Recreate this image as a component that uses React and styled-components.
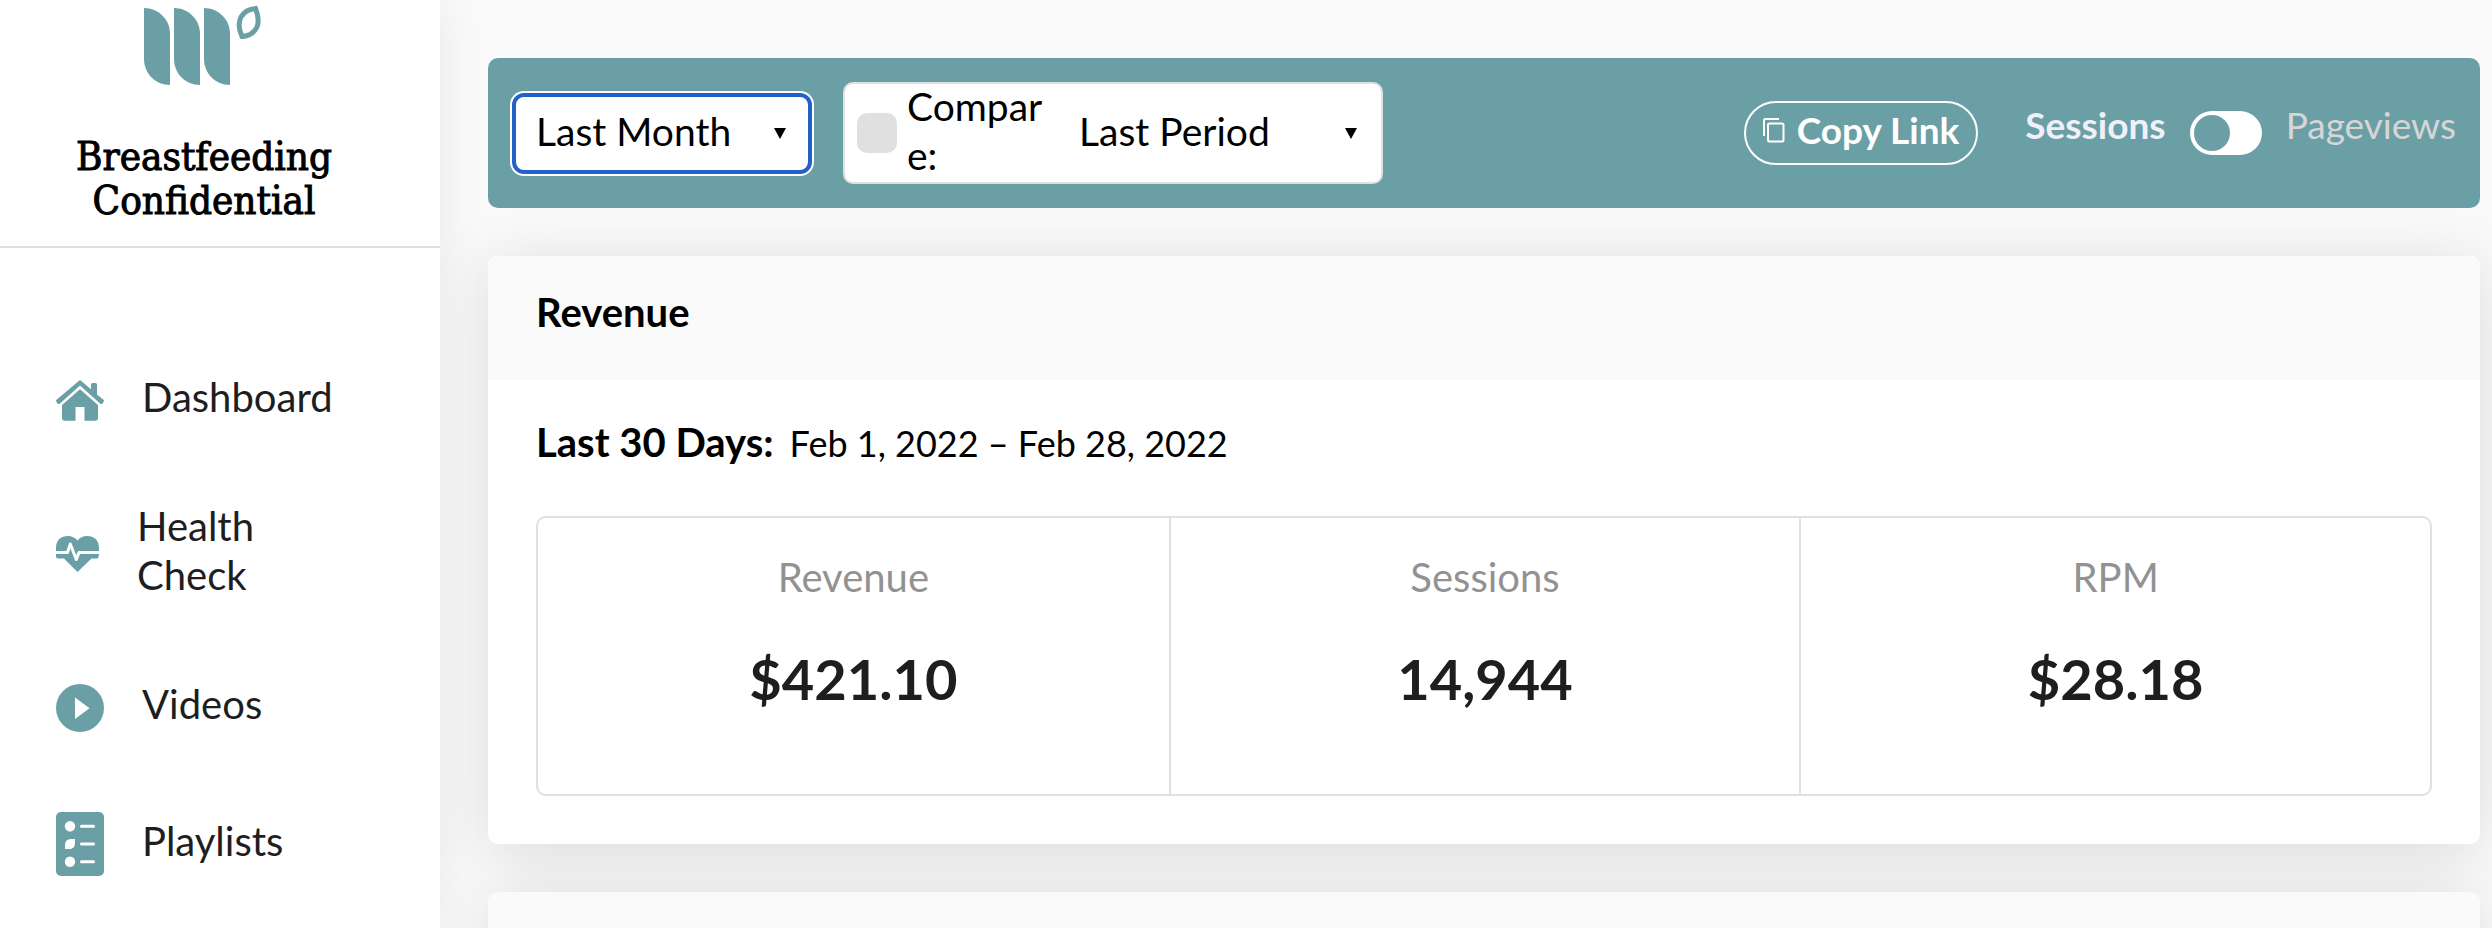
import React, { useState } from 'react'
import styled, { createGlobalStyle } from 'styled-components'

const teal = '#6b9fa6'
const line = '#e0e0e0'
const sans = 'Lato, "Open Sans", sans-serif'
const slab = '"DejaVu Serif Condensed", "DejaVu Serif", serif'

const GlobalStyle = createGlobalStyle`
  *, *::before, *::after {
    box-sizing: border-box;
  }

  body {
    margin: 0;
    background: #fafafa;
    color: #000;
    font-family: ${sans};
    font-size: 40px;
    line-height: 48px;
  }
`

const Shell = styled.div`
  display: flex;
  height: 100vh;
  overflow: hidden;
`

const Sidebar = styled.aside`
  z-index: 1;
  flex: 0 0 440px;
  background: #fff;
  box-shadow: 0 0 48px rgba(0, 0, 0, 0.08);
`

const Brand = styled.header`
  display: flex;
  flex-direction: column;
  align-items: center;
  gap: 48px;
  padding: 5px 32px 24px 0;
  border-bottom: 2px solid ${line};
`

const SiteName = styled.h1`
  margin: 0;
  font-family: ${slab};
  font-size: 40px;
  font-weight: 400;
  line-height: 44px;
  text-align: center;
  -webkit-text-stroke: 1px #000;
`

const Nav = styled.nav`
  display: flex;
  flex-direction: column;
  gap: 80px;
  padding: 128px 96px 48px 56px;
`

const NavItem = styled.a`
  display: flex;
  align-items: center;
  gap: 38px;
  color: #1e1e1e;
  text-decoration: none;

  svg {
    flex: none;
    fill: ${teal};
  }
`

const NavLabel = styled.span`
  margin: -3px 0 3px;
  line-height: 49px;
`

const Main = styled.main`
  flex: 1;
  min-width: 0;
  display: flex;
  flex-direction: column;
  gap: 48px;
  padding: 58px 12px 0 48px;
`

const Toolbar = styled.div`
  flex: none;
  display: flex;
  align-items: center;
  gap: 31px;
  padding: 24px;
  border-radius: 10px;
  background: ${teal};
`

const Picker = styled.div`
  display: flex;
  align-items: center;
  width: 300px;
  height: 81px;
  border-radius: 12px;
  background: #fff;

  &:focus-within, &.active {
    border: 4px solid #2161c8;
    box-shadow: 0 0 0 2px #fff;
  }
`

const SelectWrapper = styled.div`
  flex: 1;
  position: relative;

  &::after {
    content: '';
    position: absolute;
    top: 19px;
    right: ${props => props.$inset}px;
    border: 6px solid transparent;
    border-top: 11px solid #000;
    border-bottom: 0;
    pointer-events: none;
  }
`

const Select = styled.select`
  display: block;
  width: 100%;
  height: 48px;
  padding: 0 48px 4px 20px;
  border: 0;
  outline: 0;
  appearance: none;
  background: transparent;
  color: #000;
  font: 400 39px/44px ${sans};
`

const Compare = styled.div`
  display: flex;
  align-items: center;
  width: 540px;
  height: 102px;
  padding-left: 12px;
  border: 2px solid ${line};
  border-radius: 10px;
  background: #fff;
`

const Checkbox = styled.input`
  flex: none;
  width: 40px;
  height: 40px;
  margin: 0 10px 0 0;
  border-radius: 10px;
  appearance: none;
  background: ${line};

  &:checked {
    background: ${teal};
  }
`

const CompareLabel = styled.label`
  flex: 0 0 144px;
  margin: -2px 8px 2px 0;
  font-size: 39px;
  line-height: 49px;
  word-break: break-all;
`

const CopyButton = styled.button`
  display: flex;
  align-items: center;
  gap: 12px;
  height: 64px;
  margin-left: auto;
  padding: 0 17px;
  border: 2px solid #fff;
  border-radius: 32px;
  background: transparent;
  color: #fff;
  font: 700 37px/54px ${sans};

  svg {
    margin-bottom: 6px;
  }

  span {
    padding-bottom: 6px;
  }
`

const Metric = styled.div`
  display: flex;
  align-items: flex-start;
  gap: 24px;
  margin-left: 16px;
`

const MetricLabel = styled.label`
  color: ${props => props.$active ? '#f0f0f8' : '#d6d6d6'};
  font-size: 37px;
  font-weight: ${props => props.$active ? 700 : 400};
  line-height: 28px;
`

const Switch = styled.input`
  width: 72px;
  height: 44px;
  margin: 0;
  padding: 4px;
  border-radius: 22px;
  appearance: none;
  background: #fff;

  &::before {
    content: '';
    display: block;
    width: 36px;
    height: 36px;
    border-radius: 50%;
    background: ${teal};
  }

  &:checked::before {
    margin-left: auto;
  }
`

const Card = styled.section`
  flex: none;
  border-radius: 10px;
  background: #fff;
  box-shadow: 0 8px 64px rgba(0, 0, 0, 0.13);
`

const CardHeader = styled.header`
  min-height: 124px;
  padding: 32px 48px;
  border-radius: 10px 10px 0 0;
  background: #fafafa;
`

const CardTitle = styled.h2`
  margin: 0;
  font-size: 40px;
  line-height: 48px;
`

const CardBody = styled.div`
  padding: 38px 48px 48px;
`

const Period = styled.p`
  display: flex;
  align-items: baseline;
  gap: 16px;
  margin: 0 0 49px;

  span {
    font-size: 36px;
  }
`

const Stats = styled.dl`
  display: grid;
  grid-template-columns: repeat(3, 1fr);
  margin: 0;
  border: 2px solid ${line};
  border-radius: 10px;
`

const Stat = styled.div`
  padding: 35px 16px 81px;
  text-align: center;

  & + & {
    border-left: 2px solid ${line};
  }

  dt {
    margin-bottom: 44px;
    color: #929292;
  }

  dd {
    margin: 0;
    color: #1e1e1e;
    font-size: 56px;
    font-weight: 700;
    line-height: 68px;
  }
`

const Logo = () => (
  <svg width='120' height='81' viewBox='0 0 120 81' fill={teal} aria-hidden='true'>
    {[0, 30, 60].map(x => (
      <path key={x} transform={`translate(${x} 2)`} d='M0 1c14 0 26 11 26 26v51C11 78 0 66 0 52z' />
    ))}
    <path
      d='M111.500 3.500C114.500 11 115 17 113 22C110 28 105 31 98 31.500C94.500 24 94.500 17 97 12C100 7 105 4 111.500 3.500Z'
      fill='none'
      stroke={teal}
      strokeWidth='5'
    />
  </svg>
)

const HomeIcon = () => (
  <svg width='48' height='41' viewBox='0 0 48 41'>
    <path d='M24 0l11 9.300V4.500q0-1.500 1.500-1.500h3q1.500 0 1.500 1.500v10l6.500 5.200q1 1 0 2.300l-1 1.500q-1.200 1-2.500 0L24 5.500 4 23.500q-1.300 1-2.500 0l-1-1.500q-1-1.300 0-2.300z' />
    <path d='M24 9.300L42 25v13q0 2.700-2.700 2.700H28.500V27h-9v13.700H8.700Q6 40.700 6 38V25z' />
  </svg>
)

const HeartIcon = () => (
  <svg width='43' height='36' viewBox='0 0 43 36'>
    <path d='M0 16V12C0 4 5 0 12 0c4 0 7 1.500 9.500 4.500C24 1.500 27 0 31 0c7 0 12 4 12 12v4.500q0 6-2 6h-5.500L21.500 36 8 22.500H2q-2 0-2-2z' />
    <path
      d='M-1 16.500H11.500L14.300 8l6 15.500L23 16.500H44'
      style={{ fill: 'none', stroke: '#fff' }}
      strokeWidth='3'
      strokeLinejoin='round'
    />
  </svg>
)

const PlayIcon = () => (
  <svg width='48' height='48' viewBox='0 0 48 48'>
    <path fillRule='evenodd' d='M24 0a24 24 0 110 48 24 24 0 010-48zM19 13.500v21.500l14.500-10.800z' />
  </svg>
)

const PlaylistIcon = () => (
  <svg width='48' height='64' viewBox='0 0 48 64'>
    <rect width='48' height='64' rx='5' />
    <g fill='#fff'>
      <circle cx='14' cy='14.300' r='5.200' />
      <path d='M19 27v4q0 6-6 6H9v-4q0-6 6-6z' />
      <circle cx='14' cy='49.800' r='5.200' />
    </g>
    <path d='M25.500 14.300h12M25.500 32h12M25.500 49.800h12' stroke='#fff' strokeWidth='3' strokeLinecap='round' />
  </svg>
)

const CopyIcon = () => (
  <svg width='22' height='25' viewBox='0 0 22 25' fill='none' stroke='#fff' strokeWidth='2'>
    <path d='M1 18V2.500Q1 1 2.500 1H16' />
    <rect x='5' y='5.500' width='15.500' height='18' rx='1.500' />
  </svg>
)

const links = [
  { label: 'Dashboard', icon: HomeIcon },
  { label: 'Health Check', icon: HeartIcon },
  { label: 'Videos', icon: PlayIcon },
  { label: 'Playlists', icon: PlaylistIcon }
]

const stats = [
  { label: 'Revenue', value: '$421.10' },
  { label: 'Sessions', value: '14,944' },
  { label: 'RPM', value: '$28.18' }
]

export default function App () {
  const [pageviews, setPageviews] = useState(false)

  return (
    <Shell>
      <GlobalStyle />
      <Sidebar>
        <Brand>
          <Logo />
          <SiteName>Breastfeeding Confidential</SiteName>
        </Brand>
        <Nav>
          {links.map(({ label, icon: Icon }) => (
            <NavItem key={label} href='#'>
              <Icon />
              <NavLabel>{label}</NavLabel>
            </NavItem>
          ))}
        </Nav>
      </Sidebar>
      <Main>
        <Toolbar>
          <Picker className='active'>
            <SelectWrapper $inset={22}>
              <Select aria-label='Date range' defaultValue='month'>
                <option value='month'>Last Month</option>
                <option value='week'>Last Week</option>
              </Select>
            </SelectWrapper>
          </Picker>
          <Compare>
            <Checkbox type='checkbox' id='compare' />
            <CompareLabel htmlFor='compare'>Compare:</CompareLabel>
            <SelectWrapper $inset={24}>
              <Select aria-label='Compare with' defaultValue='period'>
                <option value='period'>Last Period</option>
                <option value='year'>Last Year</option>
              </Select>
            </SelectWrapper>
          </Compare>
          <CopyButton type='button'>
            <CopyIcon />
            <span>Copy Link</span>
          </CopyButton>
          <Metric>
            <MetricLabel htmlFor='metric' $active={!pageviews}>Sessions</MetricLabel>
            <Switch
              type='checkbox'
              role='switch'
              id='metric'
              checked={pageviews}
              onChange={e => setPageviews(e.target.checked)}
            />
            <MetricLabel htmlFor='metric' $active={pageviews}>Pageviews</MetricLabel>
          </Metric>
        </Toolbar>
        <Card>
          <CardHeader>
            <CardTitle>Revenue</CardTitle>
          </CardHeader>
          <CardBody>
            <Period>
              <strong>Last 30 Days:</strong>
              <span>Feb 1, 2022 – Feb 28, 2022</span>
            </Period>
            <Stats>
              {stats.map(({ label, value }) => (
                <Stat key={label}>
                  <dt>{label}</dt>
                  <dd>{value}</dd>
                </Stat>
              ))}
            </Stats>
          </CardBody>
        </Card>
        <Card>
          <CardHeader />
        </Card>
      </Main>
    </Shell>
  )
}
